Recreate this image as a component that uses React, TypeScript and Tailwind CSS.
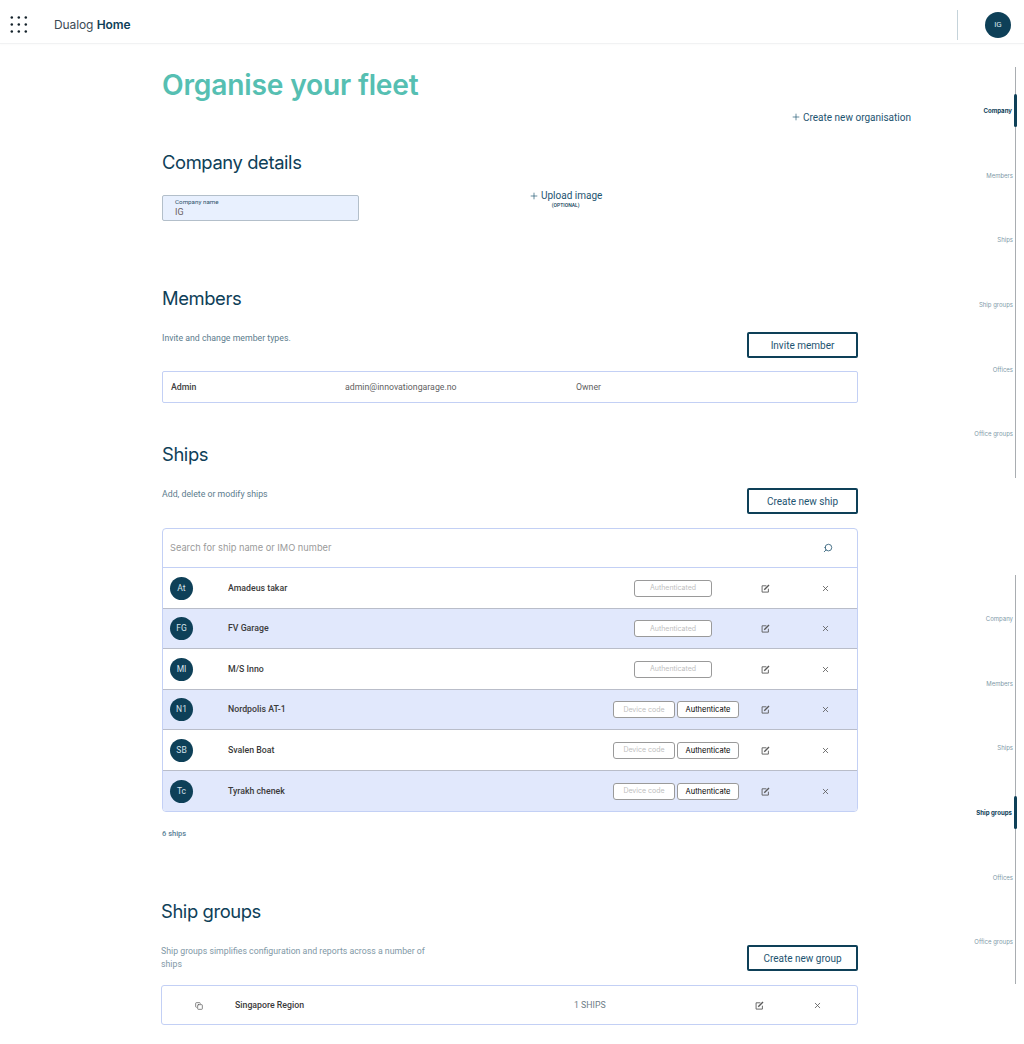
import { Plus, X, Search, Copy } from "lucide-react";

const head = "font-['Inter',sans-serif]";
const body = "font-['Roboto',sans-serif]";

function EditIcon({ className }: { className: string }) {
  return (
    <svg width="9" height="9" viewBox="0 0 10 10" fill="none" stroke="currentColor" className={"shrink-0 " + className}>
      <path d="M6 2H1.2v7h7V5.2" strokeWidth="1" />
      <path d="M3.6 6.4 8.9 1.1" strokeWidth="1.6" />
    </svg>
  );
}

function Rail({ active, className }: { active: string; className: string }) {
  const items = ["Company", "Members", "Ships", "Ship groups", "Offices", "Office groups"];
  return (
    <div className={"border-r border-[#a9adb1] " + className}>
      {items.map((t) => (
        <div key={t} className="relative flex h-[64.7px] items-center justify-end pr-[2px]">
          <span className={t === active ? "mr-[1px] text-[6.1px] font-bold text-[#0e4058]" : "text-[6px] text-[#7f9aa8]"}>{t}</span>
          {t === active && <div className="absolute right-[-2px] top-[15.5px] h-[33px] w-[3px] rounded-sm bg-[#0e4058]" />}
        </div>
      ))}
    </div>
  );
}

function Avatar({ t, size }: { t: string; size: string }) {
  return <div className={"flex shrink-0 items-center justify-center rounded-full bg-[#0e4058] text-[#d7e3ea] " + size}>{t}</div>;
}

function Heading({ children, className }: { children: string; className: string }) {
  return <h2 className={head + " text-[18.4px] leading-[24px] tracking-[-0.4px] text-[#0e4058] " + className}>{children}</h2>;
}

function OutlineButton({ children }: { children: string }) {
  return (
    <button className="flex h-[26px] w-[111px] items-center justify-center rounded-[2px] border-2 border-[#0e4058] pt-[1px] text-[10px] text-[#1d5470]">
      {children}
    </button>
  );
}

function Pill({ children, dark, className }: { children: string; dark?: boolean; className: string }) {
  return (
    <div className={head + " flex h-[17px] items-center justify-center rounded-[3px] border border-[#9a9a9a] bg-white " + (dark ? "text-[7.5px] text-black " : "text-[7px] text-[#c0c0c0] ") + className}>
      {children}
    </div>
  );
}

const ships = [
  { i: "At", n: "Amadeus takar", a: true },
  { i: "FG", n: "FV Garage", a: true },
  { i: "MI", n: "M/S Inno", a: true },
  { i: "N1", n: "Nordpolis AT-1", a: false },
  { i: "SB", n: "Svalen Boat", a: false },
  { i: "Tc", n: "Tyrakh chenek", a: false },
];

export default function App() {
  return (
    <div className={body + " h-[1044px] overflow-hidden bg-white"}>
      <header className="box-border flex h-[44px] items-center border-b border-[#f1f2f3] pt-[7px] shadow-[0_1px_2px_rgba(0,0,0,0.02)]">
        <svg width="18" height="18" viewBox="0 0 18 18" className="ml-[10px] fill-[#14222b]">
          {[1.8, 8.8, 15.8].map((x) =>
            [1.6, 8.4, 15.4].map((y) => <circle key={x + "-" + y} cx={x} cy={y} r="1.25" />)
          )}
        </svg>
        <div className={head + " ml-[26px] text-[12px] tracking-[-0.1px] text-[#3b4a55]"}>
          Dualog <span className="font-semibold text-[#0e4058]">Home</span>
        </div>
        <div className="ml-auto h-[30px] w-[1px] bg-[#c5d3da]" />
        <Avatar t="IG" size="ml-[27px] mr-[13px] h-[26px] w-[26px] text-[8px]" />
      </header>

      <div className="flex">
        <main className="ml-[162px] w-[696px]">
          <h1 className={head + " mt-[22px] text-[28.2px] leading-[38px] font-semibold tracking-[-0.2px] text-[#56bfb2]"}>Organise your fleet</h1>
          <div className="mt-[5px] ml-[629px] flex h-[16px] w-[130px] items-center gap-[2px] whitespace-nowrap text-[10px] text-[#1d5470]">
            <Plus size={10} strokeWidth={1.6} />
            Create new organisation
          </div>

          <Heading className="mt-[25px]">Company details</Heading>
          <div className="mt-[21px] flex items-start">
            <div className="flex h-[26px] w-[197px] flex-col rounded-[2px] border border-[#b3bfca] bg-[#e8f0fe] pl-[12px] pt-[1.5px]">
              <span className="text-[6.25px] leading-[8px] text-[#31566c]">Company name</span>
              <span className="mt-[1px] text-[9px] leading-[11px] text-[#6b5f5f]">IG</span>
            </div>
            <div className="-mt-[6px] ml-[170px] flex flex-col items-center">
              <div className="flex items-center gap-[2px] text-[10px] leading-[13px] text-[#1d5470]">
                <Plus size={10} strokeWidth={1.6} />
                Upload image
              </div>
              <span className="text-[5px] leading-[7px] font-medium text-[#0e4058]">(OPTIONAL)</span>
            </div>
          </div>

          <Heading className="mt-[65px]">Members</Heading>
          <div className="mt-[22px] flex items-center justify-between">
            <p className="mb-[14px] text-[8.75px] leading-[11px] text-[#5c7c8d]">Invite and change member types.</p>
            <OutlineButton>Invite member</OutlineButton>
          </div>
          <div className="mt-[13px] flex h-[32px] items-center rounded-[2px] border border-[#c3d0f5] pt-[1px] text-[8.75px] text-[#5f5f5f]">
            <span className="ml-[8px] w-[174px] font-medium text-[#3f3f3f]">Admin</span>
            <span className="w-[231px]">admin@innovationgarage.no</span>
            <span>Owner</span>
          </div>

          <Heading className="mt-[39px]">Ships</Heading>
          <div className="mt-[22px] flex items-center justify-between">
            <p className="mb-[14px] text-[8.75px] leading-[11px] text-[#5c7c8d]">Add, delete or modify ships</p>
            <OutlineButton>Create new ship</OutlineButton>
          </div>
          <div className="mt-[14px] overflow-hidden rounded-[4px] border border-[#c3d0f5]">
            <div className="flex h-[39px] items-center border-b border-[#c3d0f5]">
              <span className={head + " ml-[7px] text-[9.25px] text-[#9a9a9a]"}>Search for ship name or IMO number</span>
              <Search size={10} strokeWidth={2} className="ml-auto mr-[24px] -scale-x-100 text-[#2a5a75]" />
            </div>
            {ships.map((s, idx) => (
              <div
                key={s.n}
                className={
                  "flex h-[40.5px] items-center pt-[1px] " +
                  (idx % 2 ? "bg-[#e1e8fc] " : "bg-white ") +
                  (idx < 5 ? "border-b border-[#b9bdc9]" : "")
                }
              >
                <Avatar t={s.i} size="ml-[7px] h-[23px] w-[23px] text-[8.5px]" />
                <span className="ml-[35px] w-[385px] shrink-0 text-[8.75px] font-medium text-[#3a3a3a]">{s.n}</span>
                <div className="flex w-[126px] shrink-0 items-center gap-[2px]">
                  {s.a ? (
                    <Pill className="ml-[21px] w-[78px]">Authenticated</Pill>
                  ) : (
                    <>
                      <Pill className="w-[62px]">Device code</Pill>
                      <Pill dark className="w-[62px]">Authenticate</Pill>
                    </>
                  )}
                </div>
                <EditIcon className="ml-[22px] text-[#5a5a5a]" />
                <X size={9} strokeWidth={2.2} className="ml-[51px] text-[#5a5a5a]" />
              </div>
            ))}
          </div>
          <p className="mt-[16px] text-[7.5px] leading-[12px] font-medium text-[#5a7f96]">6 ships</p>

          <div className="-ml-px">
            <Heading className="mt-[59px]">Ship groups</Heading>
            <div className="mt-[22px] flex items-start justify-between">
              <p className="w-[270px] text-[8.75px] leading-[13px] text-[#7f98a6]">
                Ship groups simplifies configuration and reports across a number of ships
              </p>
              <OutlineButton>Create new group</OutlineButton>
            </div>
            <div className="mt-[14px] flex h-[40px] w-[697px] items-center rounded-[3px] border border-[#c3d0f5] pt-[1px] text-[8.75px]">
              <Copy size={8} strokeWidth={2.2} className="ml-[33px] text-[#5a5a5a]" />
              <span className="ml-[32px] w-[339px] shrink-0 text-[8.75px] font-medium text-[#3a3a3a]">Singapore Region</span>
              <span className="w-[181px] shrink-0 text-[#6d7c85]">1 SHIPS</span>
              <EditIcon className="text-[#5a5a5a]" />
              <X size={9} strokeWidth={2.2} className="ml-[49px] text-[#5a5a5a]" />
            </div>
          </div>
        </main>

        <aside className={head + " ml-auto mr-[8px] w-[80px]"}>
          <Rail active="Company" className="mt-[23px] pt-[11px] pb-[11.5px]" />
          <Rail active="Ship groups" className="mt-[97px] pt-[11.5px] pb-[10px]" />
        </aside>
      </div>
    </div>
  );
}
